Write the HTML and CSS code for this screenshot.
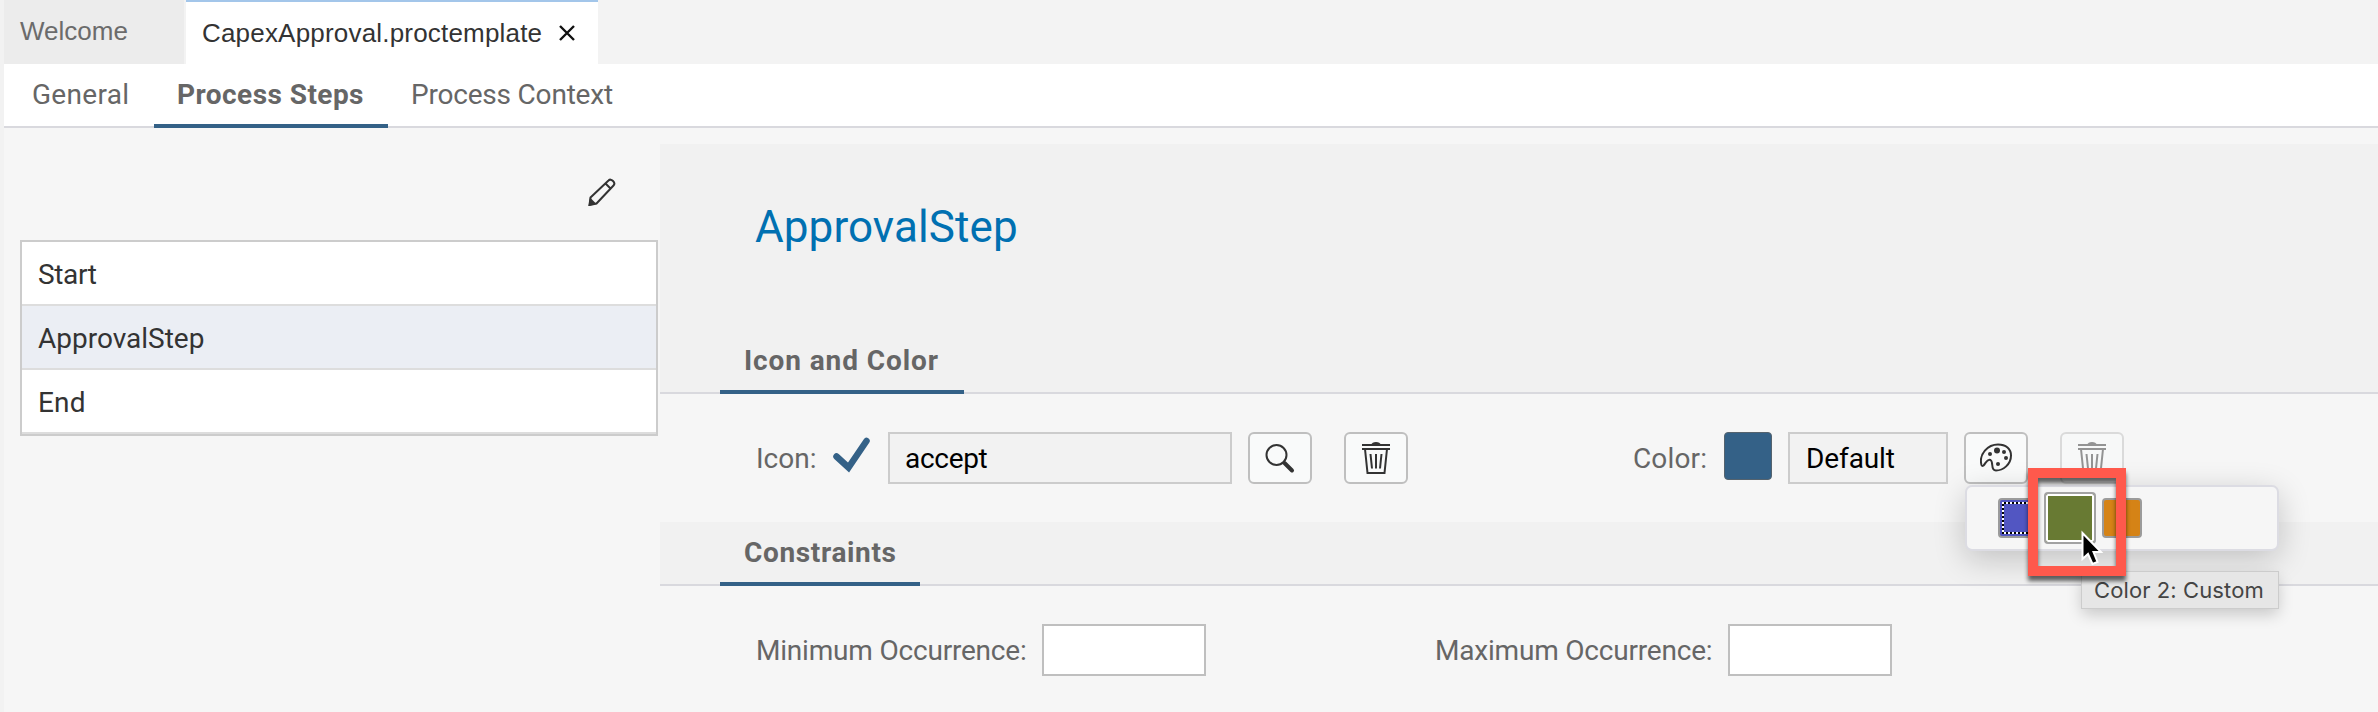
FILE: index.html
```html
<!DOCTYPE html>
<html lang="en">
<head>
<meta charset="utf-8">
<title>CapexApproval.proctemplate</title>
<link rel="stylesheet" href="styles.css">
</head>
<body>
<div class="app">
  <div class="file-tabs">
    <div class="file-tab file-tab-welcome"><span class="t-welcome">Welcome</span></div>
    <div class="file-tab file-tab-active"><span class="t-file">CapexApproval.proctemplate</span>
      <svg class="close" viewBox="0 0 18 18"><path d="M2 2 L16 16 M16 2 L2 16"/></svg>
    </div>
  </div>
  <nav class="nav">
    <a class="nav-item nav-general"><span class="t-general">General</span></a>
    <a class="nav-item nav-active"><span class="t-steps">Process Steps</span></a>
    <a class="nav-item nav-context"><span class="t-context">Process Context</span></a>
  </nav>
  <main class="main">
    <aside class="side">
      <div class="side-tools">
        <svg class="pencil" viewBox="0 0 28 28"><path d="M2.500 19.500 L20.500 2.500 Q22.500 0.500 25 3 Q27.500 5.500 25.500 7.500 L8.500 25.500 L1.500 27 Z M17.500 5.500 L22.500 10.500"/><path class="fill" d="M0.500 28 L2 19.500 L8.500 26 Z"/></svg>
      </div>
      <ul class="steps">
        <li><span class="t-start">Start</span></li>
        <li class="selected"><span class="t-approval">ApprovalStep</span></li>
        <li><span class="t-end">End</span></li>
      </ul>
    </aside>
    <section class="detail">
      <header class="head">
        <h1><span class="t-title">ApprovalStep</span></h1>
      </header>
      <div class="section-bar"><h2 class="w-icon"><span class="t-iconcolor">Icon and Color</span></h2></div>
      <div class="fields fields-icon">
        <label class="lab-icon"><span class="t-icon">Icon:</span></label>
        <svg class="check" viewBox="0 0 40 40"><path d="M4.500 20.500 L16.500 31.500 L34.500 5"/></svg>
        <div class="input readonly in-accept"><span class="t-accept">accept</span></div>
        <button class="btn"><svg class="ico" viewBox="0 0 32 32"><circle cx="12.500" cy="13" r="10"/><path class="thick" d="M20.500 21 L28 28.500"/></svg></button>
        <button class="btn btn-gap"><svg class="ico" viewBox="0 0 32 32"><path d="M2 3 H30 M2 7 H30"/><path class="fill" d="M11 3 Q12 0 16 0 Q20 0 21 3 Z"/><path d="M5 7 L7.500 31 H24.500 L27 7 M10.500 12 L12 26.500 M16 12 V26.500 M21.500 12 L20 26.500"/></svg></button>
        <label class="lab-color"><span class="t-color">Color:</span></label>
        <div class="swatch-current"></div>
        <div class="input readonly in-default"><span class="t-default">Default</span></div>
        <button class="btn btn-palette"><svg class="ico" viewBox="0 0 32 32"><path d="M1.500 23 C-1.500 12 8 2.500 18 2.500 C26 2.500 31 7 31 13.500 C31 22.500 23 28.500 16 28.500 C10 28.500 14 20 10.500 18 C7 16.500 6 21 3.500 23.500 Q2 24.500 1.500 23 Z"/><g class="fill"><circle cx="17" cy="8.500" r="3"/><circle cx="10" cy="12" r="2"/><circle cx="24" cy="10" r="2"/><circle cx="26" cy="16" r="2"/><circle cx="18" cy="22" r="2"/></g></svg></button>
        <button class="btn btn-gap disabled"><svg class="ico" viewBox="0 0 32 32"><path d="M2 3 H30 M2 7 H30"/><path class="fill" d="M11 3 Q12 0 16 0 Q20 0 21 3 Z"/><path d="M5 7 L7.500 31 H24.500 L27 7 M10.500 12 L12 26.500 M16 12 V26.500 M21.500 12 L20 26.500"/></svg></button>
      </div>
      <div class="section-bar"><h2 class="w-con"><span class="t-constraints">Constraints</span></h2></div>
      <div class="fields">
        <label class="lab-min"><span class="t-min">Minimum Occurrence:</span></label>
        <div class="input in-num"></div>
        <label class="lab-max"><span class="t-max">Maximum Occurrence:</span></label>
        <div class="input in-num"></div>
      </div>
    </section>
  </main>
  <div class="popover">
    <div class="chip blue"></div>
    <div class="chip green"></div>
    <div class="chip orange"></div>
  </div>
  <div class="tooltip"><span class="t-tip">Color 2: Custom</span></div>
  <div class="highlight"></div>
  <svg class="cursor" viewBox="0 0 24 36"><path d="M2.500 3 V29 L8 24 L12.500 34 L17.500 32 L13.500 22 H21 Z"/></svg>
</div>
</body>
</html>
```
FILE: styles.css
```css
* { box-sizing: border-box; }
body { margin: 0; background: #f5f5f5; font-family: Roboto, "Liberation Sans", sans-serif; font-size: 28px; color: #666; }
h1, h2, ul { margin: 0; padding: 0; list-style: none; font-weight: 400; }
span { white-space: nowrap; }
.app { position: relative; width: 2378px; height: 712px; padding-left: 4px; overflow: hidden; background: linear-gradient(90deg, #f2f2f2 4px, #f6f6f6 4px); }
.file-tabs { display: flex; gap: 2px; height: 64px; background: #f3f3f3; font-family: "Liberation Sans", sans-serif; font-size: 26px; }
.file-tab { display: flex; align-items: center; width: 180px; padding-left: 16px; background: #ececec; color: #6b6b6b; line-height: 60px; }
.file-tab-welcome { padding-bottom: 2px; }
.file-tab-active { width: 412px; background: #fff; color: #333; border-top: 2px solid #a3c6ea; gap: 16px; }
.t-file { letter-spacing: .19px; }
.close { width: 18px; height: 18px; fill: none; stroke: #111; stroke-width: 2.4; }
.nav { display: flex; height: 64px; background: #fff; border-bottom: 2px solid #d9d9de; }
.nav-item { height: 64px; padding-left: 28px; line-height: 62px; }
.nav-general { width: 150px; letter-spacing: .3px; }
.nav-active { width: 234px; padding-left: 23px; font-weight: 700; letter-spacing: .45px; border-bottom: 4px solid #346187; }
.nav-context { padding-left: 23px; letter-spacing: -.2px; }
.main { display: flex; height: 584px; }
.side { width: 656px; padding: 50px 2px 0 16px; }
.side-tools { display: flex; justify-content: flex-end; height: 62px; padding-right: 42px; }
.pencil { width: 28px; height: 28px; fill: none; stroke: #333; stroke-width: 2; }
.pencil .fill { fill: #333; stroke: none; }
.steps { border: 2px solid #ccc; background: #fff; color: #333; }
.steps li { height: 64px; padding-left: 16px; line-height: 66px; border-bottom: 2px solid #ddd; }
.steps .selected { background: #ebeef4; }
.t-start { letter-spacing: -.35px; }
.t-end { letter-spacing: .2px; }
.detail { flex: 1; padding-top: 16px; }
.head { height: 186px; padding: 56px 0 0 95px; background: #f1f1f1; }
h1 { font-size: 44px; line-height: 55px; letter-spacing: .1px; color: #0070b1; }
.section-bar { height: 64px; padding-left: 60px; background: #f1f1f1; border-bottom: 2px solid #d9d9de; }
h2 { height: 64px; padding-left: 24px; font-size: 28px; line-height: 61px; font-weight: 700; border-bottom: 4px solid #346187; }
.w-icon { width: 244px; letter-spacing: .9px; }
.w-con { width: 200px; letter-spacing: .65px; }
.fields { display: flex; padding: 38px 0 0 96px; }
.fields-icon { height: 128px; }
label { line-height: 54px; }
.lab-icon { width: 76px; }
.check { width: 40px; height: 40px; margin: 4px 16px 0 0; fill: none; stroke: #346187; stroke-width: 6.5; stroke-linecap: round; }
.input { height: 52px; padding-left: 16px; line-height: 50px; border: 2px solid #bfbfbf; background: #fff; color: #000; }
.readonly { border-color: #ccc; background: #f2f2f2; }
.in-accept { width: 344px; margin-right: 16px; padding-left: 15px; letter-spacing: -.3px; }
.btn { display: flex; align-items: center; justify-content: center; width: 64px; height: 52px; padding: 0; border: 2px solid #bfbfbf; border-radius: 6px; background: #f9fafa; }
.btn-gap { margin-left: 32px; }
.disabled { opacity: .5; }
.ico { width: 32px; height: 32px; fill: none; stroke: #333; stroke-width: 2; }
.ico .fill { fill: #333; stroke: none; }
.thick { stroke-width: 4; stroke-linecap: round; }
.lab-color { width: 91px; margin-left: 225px; letter-spacing: .15px; }
.swatch-current { width: 48px; height: 48px; margin-right: 16px; background: #346187; border: 1px solid #55636e; border-radius: 4px; }
.in-default { width: 160px; margin-right: 16px; padding-left: 16px; letter-spacing: -.1px; }
.lab-min { width: 286px; letter-spacing: -.2px; }
.in-num { width: 164px; }
.lab-max { width: 293px; margin-left: 229px; letter-spacing: -.2px; }
.popover { position: absolute; left: 1965px; top: 485px; width: 314px; height: 66px; display: flex; align-items: center; padding-left: 31px; background: #f6f6f6; border: 2px solid #dcdce3; border-radius: 7px; box-shadow: 0 8px 32px rgba(0,0,0,.2); }
.chip { width: 40px; height: 40px; border: 2px solid #9b9b9b; border-radius: 4px; }
.blue { background: #5256c2; padding: 2px; }
.blue::before { content: ""; display: block; width: 32px; height: 32px; background: linear-gradient(#5256c2, #5256c2) 2px 2px / 28px 28px no-repeat, repeating-conic-gradient(#000 0 25%, #fff 0 50%) 0 0 / 4px 4px; }
.green { width: 52px; height: 52px; margin: 0 6px; background: #687a33; border-color: #a2a2a2; box-shadow: inset 0 0 0 2px #fff; }
.orange { background: #d58316; }
.tooltip { position: absolute; left: 2082px; top: 572px; width: 196px; height: 36px; padding-left: 12px; line-height: 37px; font-family: Inter, sans-serif; font-size: 22px; letter-spacing: .1px; color: #444; background: #e6e6e6; box-shadow: 0 0 0 1px #ccc, 0 6px 16px rgba(0,0,0,.2); }
.highlight { position: absolute; left: 2028px; top: 468px; width: 98px; height: 108px; border: 10px solid #ff594c; filter: drop-shadow(0 5px 2px rgba(0,0,0,.6)); }
.cursor { position: absolute; left: 2080px; top: 530px; width: 24px; height: 36px; fill: #000; stroke: #fff; stroke-width: 2; }
```
